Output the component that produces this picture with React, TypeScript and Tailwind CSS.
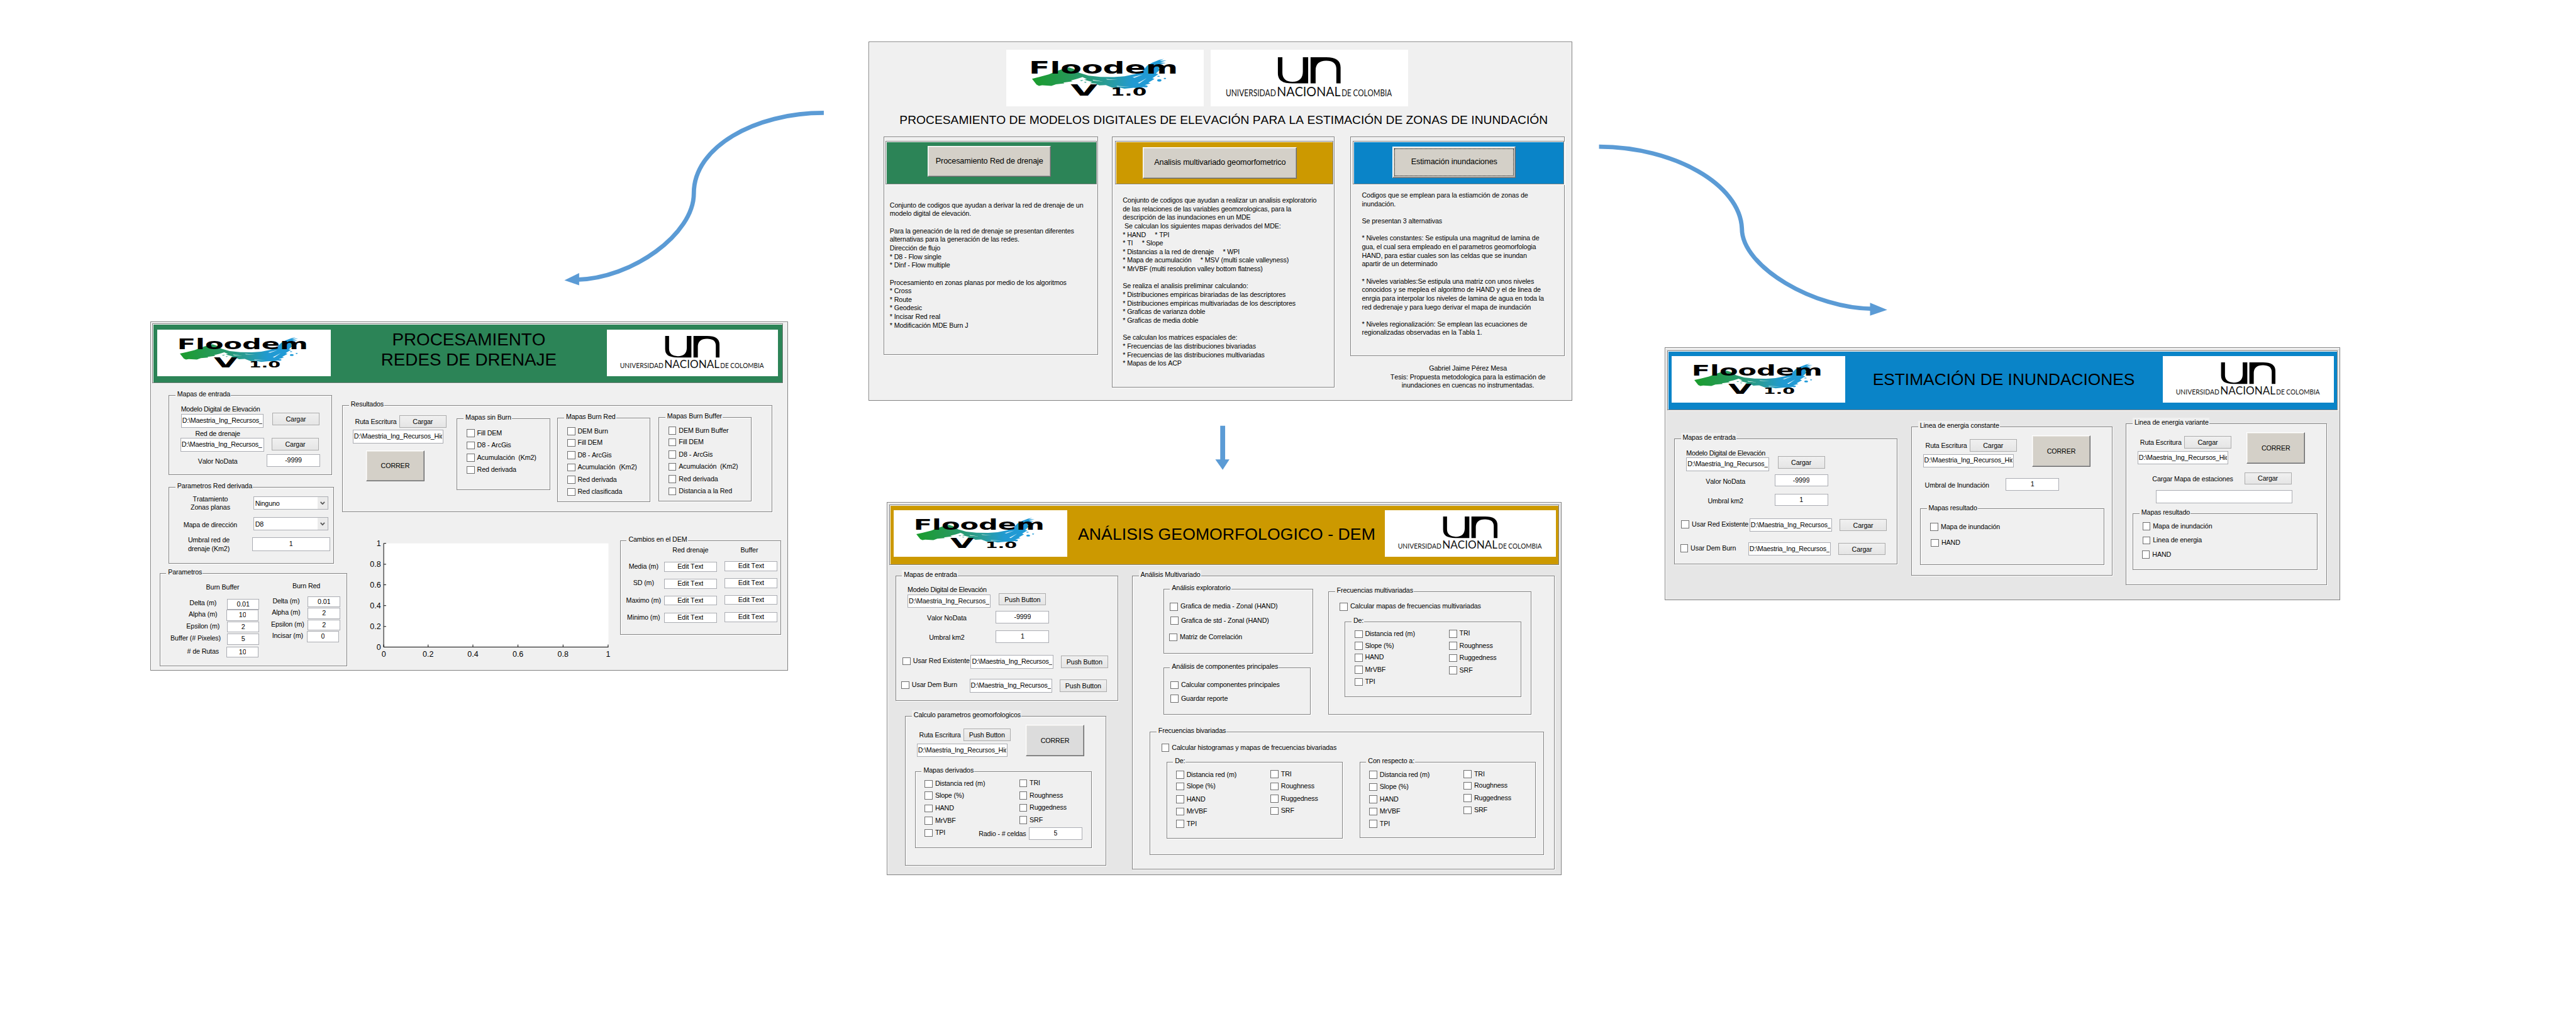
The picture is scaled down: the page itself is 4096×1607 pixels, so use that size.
import React from "react";
import clsx from "clsx";

type Kids = { className?: string; children?: React.ReactNode };

const ETCHED =
  "border border-[#828282] shadow-[inset_1px_1px_0_#fff,1px_1px_0_#fff]";

function AppWindow({ className, children }: Kids) {
  return (
    <section className={clsx("absolute flex flex-col items-start", ETCHED, className)}>
      {children}
    </section>
  );
}

function Panel({ title, className, children }: Kids & { title?: string }) {
  return (
    <div className={clsx("flex shrink-0 flex-col items-start bg-[#f0f0f0]", ETCHED, className)}>
      {title && (
        <div className="-mt-[10px] ml-[10px] h-[16px] shrink-0 whitespace-nowrap bg-[#f0f0f0] pl-[3px] pr-px leading-[16px]">
          {title}
        </div>
      )}
      {children}
    </div>
  );
}

function Text({ className, children }: Kids) {
  return (
    <div className={clsx("shrink-0 whitespace-pre leading-[14px]", className)}>{children}</div>
  );
}

function Field({ value = "", className, path }: { value?: string; className?: string; path?: boolean }) {
  return (
    <div
      className={clsx(
        "flex shrink-0 items-center overflow-hidden border border-[#abadb3] bg-white",
        path ? "justify-start px-px" : "justify-center",
        className
      )}
    >
      <span className={clsx("overflow-hidden whitespace-nowrap leading-[14px]", path && "tracking-[-0.2px]")}>{value}</span>
    </div>
  );
}

const SHORT_PATH = "D:\\Maestria_Ing_Recursos_";
const LONG_PATH = "D:\\Maestria_Ing_Recursos_Hid";

function FlatButton({ label, className }: { label: string; className?: string }) {
  return (
    <button
      className={clsx(
        "flex h-[20px] w-[77px] shrink-0 items-center justify-center whitespace-nowrap border border-[#acacac] bg-linear-to-b from-[#f0f0f0] to-[#e5e5e5]",
        className
      )}
    >
      {label}
    </button>
  );
}

function RaisedButton({ label, className, focused }: { label: string; className?: string; focused?: boolean }) {
  return (
    <button
      className={clsx(
        "flex shrink-0 items-stretch whitespace-nowrap border border-t-white border-l-white border-r-[#696969] border-b-[#696969] p-[2px] shadow-[inset_-1px_-1px_0_#a0a0a0,inset_1px_1px_0_#e9e7e3]",
        className
      )}
    >
      <span
        className={clsx(
          "flex flex-1 items-center justify-center border",
          focused ? "border-dotted border-black" : "border-transparent"
        )}
      >
        {label}
      </span>
    </button>
  );
}

function Check({ label, className }: { label: string; className?: string }) {
  return (
    <label className={clsx("flex h-[14px] shrink-0 items-center gap-[4px] whitespace-pre leading-[14px]", className)}>
      <span className="size-[13px] shrink-0 border border-[#707070] bg-white" />
      {label}
    </label>
  );
}

function Select({ value, className }: { value: string; className?: string }) {
  return (
    <div
      className={clsx(
        "flex h-[22px] w-[122px] shrink-0 items-stretch border border-[#abadb3] bg-white",
        className
      )}
    >
      <span className="flex-1 pl-[2px] pt-[3px] leading-[16px]">{value}</span>
      <span className="flex w-[16px] items-center justify-center bg-[#ebebeb]">
        <svg className="h-[6px] w-[8px]" viewBox="0 0 8 6">
          <path d="M0.8 1 L4 4.4 L7.2 1" fill="none" stroke="#555" strokeWidth="1.8" />
        </svg>
      </span>
    </div>
  );
}

function FloodemLogo({ className }: { className?: string }) {
  return (
    <svg className={clsx("shrink-0 bg-white", className)} viewBox="0 0 322 92" preserveAspectRatio="none">
      <defs>
        <linearGradient id="wave" x1="0" y1="0" x2="1" y2="0">
          <stop offset="0" stopColor="#1a9c2c" />
          <stop offset="0.3" stopColor="#27995c" />
          <stop offset="0.55" stopColor="#2a9c96" />
          <stop offset="0.75" stopColor="#219ad2" />
          <stop offset="1" stopColor="#219ad8" />
        </linearGradient>
      </defs>
      <g transform="scale(0.4334 0.3333) translate(-25 -33)" fill="url(#wave)">
        <path d="M122 175 L150 166 L185 154 L215 138 L240 126 L262 120 L280 128 L300 146 L335 160 L380 166 L430 167 L470 163 L510 152 L540 134 L556 110 L575 96 L600 83 L618 78 L602 88 L628 85 L604 95 L626 98 L596 106 L612 112 L598 124 L604 130 L588 150 L598 152 L575 172 L583 176 L560 194 L568 198 L546 206 L557 213 L540 216 L520 222 L505 219 L470 224 L448 217 L425 219 L400 206 L375 208 L362 199 L340 197 L348 191 L318 180 L328 177 L312 167 L290 176 L268 184 L275 188 L240 194 L244 198 L212 202 L195 210 L160 207 L148 210 L139 204 Z" />
        <ellipse cx="601" cy="183" rx="8" ry="6" fill="#219ad8" />
        <ellipse cx="622" cy="174" rx="4.500" ry="3" fill="#219ad8" />
        <ellipse cx="549" cy="212" rx="8" ry="5" fill="#219ad8" />
        <ellipse cx="598" cy="163" rx="5" ry="2" fill="#219ad8" />
        <ellipse cx="622" cy="120" rx="4" ry="1.500" fill="#219ad8" />
        <path d="M302 183 l14 -2 l-8 6 z M318 190 l10 1 l-6 4 z M430 223 l30 4 l-14 2 z" fill="#2a9c84" />
        <path d="M400 176 l45 5 l-40 -2 z M440 210 l50 3 l-48 0 z M350 180 l40 9 l-38 -5 z M500 168 l40 -14 l-32 16 z M520 196 l34 -24 l-28 26 z" fill="#fff" />
      </g>
      <g fontFamily='"DejaVu Sans"' fontWeight="700" fill="#000">
        <text x="37" y="39" fontSize="27.500" letterSpacing="0" textLength="243" lengthAdjust="spacingAndGlyphs">Floodem</text>
        <text x="105" y="75" fontSize="26" letterSpacing="0" textLength="44" lengthAdjust="spacingAndGlyphs">V</text>
        <text x="170" y="75" fontSize="18.500" letterSpacing="0" textLength="59" lengthAdjust="spacingAndGlyphs">1.0</text>
      </g>
    </svg>
  );
}

function UnalLogo({ className }: { className?: string }) {
  return (
    <svg className={clsx("shrink-0 bg-white", className)} viewBox="0 0 322 92" preserveAspectRatio="none">
      <g transform="scale(0.4334 0.3333) translate(-793 -33)">
        <path d="M1046 70 H1063 V146 C1063 174 1077 190 1101 190 C1127 190 1140 172 1140 140 V70 H1160 V198 H1100 C1062 198 1046 182 1046 148 Z" />
        <path d="M1169 198 V70 H1228 C1264 70 1282 86 1282 120 V198 H1266 V126 C1266 100 1252 87 1228 87 C1202 87 1188 103 1188 134 V198 Z" />
      </g>
      <g fontFamily="Lato" fill="#111">
        <text x="24.500" y="76" fontSize="15" letterSpacing="0" textLength="82" lengthAdjust="spacingAndGlyphs">UNIVERSIDAD</text>
        <text x="108" y="75.500" fontSize="22" letterSpacing="0" textLength="104" lengthAdjust="spacingAndGlyphs">NACIONAL</text>
        <text x="213.500" y="76" fontSize="15" letterSpacing="0" textLength="82" lengthAdjust="spacingAndGlyphs">DE COLOMBIA</text>
      </g>
    </svg>
  );
}

function Paragraph({ lines, className }: { lines: string[]; className?: string }) {
  return (
    <div className={className}>
      {lines.map((line, i) => (
        <Text key={i} className="h-[14px]">
          {line}
        </Text>
      ))}
    </div>
  );
}

const DRAINAGE_LINES = [
  "Conjunto de codigos que ayudan a derivar la red de drenaje de un",
  "modelo digital de elevación.",
  "",
  "Para la geneación de la red de drenaje se presentan diferentes",
  "alternativas para la generación de las redes.",
  "Dirección de flujo",
  "* D8 - Flow single",
  "* Dinf - Flow multiple",
  "",
  "Procesamiento en zonas planas por medio de los algoritmos",
  "* Cross",
  "* Route",
  "* Geodesic",
  "* Incisar Red real",
  "* Modificación MDE Burn J",
];

const GEOMORPHOMETRIC_LINES = [
  "Conjunto de codigos que ayudan a realizar un analisis exploratorio",
  "de las relaciones de las variables geomorologicas, para la",
  "descripción de las inundaciones en un MDE",
  " Se calculan los siguientes mapas derivados del MDE:",
  "* HAND     * TPI",
  "* TI     * Slope",
  "* Distancias a la red de drenaje     * WPI",
  "* Mapa de acumulación     * MSV (multi scale valleyness)",
  "* MrVBF (multi resolution valley bottom flatness)",
  "",
  "Se realiza el analisis preliminar calculando:",
  "* Distribuciones empiricas birariadas de las descriptores",
  "* Distribuciones empiricas multivariadas de los descriptores",
  "* Graficas de varianza doble",
  "* Graficas de media doble",
  "",
  "Se calculan los matrices espaciales de:",
  "* Frecuencias de las distribuciones bivariadas",
  "* Frecuencias de las distribuciones multivariadas",
  "* Mapas de los ACP",
];

const FLOOD_LINES = [
  "Codigos que se emplean para la estiamción de zonas de",
  "inundación.",
  "",
  "Se presentan 3 alternativas",
  "",
  "* Niveles constantes: Se estipula una magnitud de lamina de",
  "gua, el cual sera empleado en el parametros geomorfologia",
  "HAND, para estiar cuales son las celdas que se inundan",
  "apartir de un determinado",
  "",
  "* Niveles variables:Se estipula una matriz con unos niveles",
  "conocidos y se meplea el algoritmo de HAND y el de linea de",
  "enrgia para interpolar los niveles de lamina de agua en toda la",
  "red dedrenaje y para luego derivar el mapa de inundación",
  "",
  "* Niveles regionalización: Se emplean las ecuaciones de",
  "regionalizadas observadas en la Tabla 1.",
];

function MainWindow() {
  return (
    <AppWindow className="left-[1416px] top-[68px] h-[585px] w-[1148px] bg-[#f0f0f0]">
      <div className="ml-[224px] mt-[12px] flex gap-[11px]">
        <FloodemLogo className="h-[92px] w-[322px]" />
        <UnalLogo className="h-[92px] w-[322px]" />
      </div>
      <h1 className="ml-[50px] mt-[11px] whitespace-nowrap text-[19.7px] leading-[24px] tracking-[0.035px]">
        PROCESAMIENTO DE MODELOS DIGITALES DE ELEVACIÓN PARA LA ESTIMACIÓN DE ZONAS DE INUNDACIÓN
      </h1>
      <div className="mt-[15px] flex items-start">
        <Panel className="ml-[24px] h-[355px] w-[350px]">
          <Panel className="ml-[2px] mt-[6px] h-[71px] w-[345px] bg-[#2c8457]!">
            <RaisedButton label="Procesamiento Red de drenaje" className="ml-[68px] mt-[7px] h-[50px] w-[201px] bg-[#d4d0c8] text-[13px]" />
          </Panel>
          <Paragraph className="ml-[9px] mt-[27px] tracking-[-0.11px]" lines={DRAINAGE_LINES} />
        </Panel>
        <Panel className="ml-[22px] h-[409px] w-[363px]">
          <Panel className="ml-[4px] mt-[6px] h-[71px] w-[356px] bg-[#cc9900]!">
            <RaisedButton label="Analisis multivariado geomorfometrico" className="ml-[45px] mt-[9px] h-[51px] w-[251px] bg-[#d4d0c8] text-[13px]" />
          </Panel>
          <Paragraph className="ml-[17px] mt-[19px] tracking-[-0.13px]" lines={GEOMORPHOMETRIC_LINES} />
        </Panel>
        <div className="ml-[26px]">
          <Panel className="h-[358px] w-[350px]">
            <Panel className="ml-[3px] mt-[6px] h-[71px] w-[345px] bg-[#0a84c8]!">
              <RaisedButton focused label="Estimación inundaciones" className="ml-[64px] mt-[8px] h-[51px] w-[201px] bg-[#d4d0c8] text-[13px]" />
            </Panel>
            <Paragraph className="ml-[18px] mt-[11px] tracking-[-0.11px]" lines={FLOOD_LINES} />
          </Panel>
          <Paragraph
            className="ml-[34px] mt-[13px] text-center tracking-[-0.11px]"
            lines={[
              "Gabriel Jaime Pérez Mesa",
              "Tesis: Propuesta metodologica para la estimación de",
              "inundaciones en cuencas no instrumentadas.",
            ]}
          />
        </div>
      </div>
    </AppWindow>
  );
}

function AxesChart({ className }: { className?: string }) {
  const xs: [number, string][] = [[36, "0"], [108.5, "0.2"], [181.5, "0.4"], [255, "0.6"], [328.5, "0.8"], [402, "1"]];
  const ys: [number, string][] = [[11, "1"], [45, "0.8"], [78.500, "0.6"], [112.5, "0.4"], [146.5, "0.2"], [180, "0"]];
  return (
    <svg className={clsx("shrink-0", className)} viewBox="0 0 420 205" fontSize="12.800" letterSpacing="0">
      <rect x="36" y="11" width="366.500" height="169" fill="#fff" />
      <path d="M36 11 V180 H402.500" fill="none" stroke="#000" strokeWidth="1" />
      {ys.map(([y, label]) => (
        <g key={"y" + label}>
          <path d={`M36 ${y} h4`} stroke="#000" strokeWidth="1" />
          <text x="31.500" y={y + 4.6} textAnchor="end">{label}</text>
        </g>
      ))}
      {xs.map(([x, label]) => (
        <g key={"x" + label}>
          <path d={`M${x} 180 v-4`} stroke="#000" strokeWidth="1" />
          <text x={x} y="196" textAnchor="middle">{label}</text>
        </g>
      ))}
    </svg>
  );
}

function NumberField({ value, className }: { value: string; className?: string }) {
  return <Field value={value} className={clsx("h-[18px] w-[53px]", className)} />;
}

function EditField({ className }: { className?: string }) {
  return <Field value="Edit Text" className={clsx("h-[16px] w-[86px]", className)} />;
}

function DrainageWindow() {
  return (
    <AppWindow className="left-[245px] top-[524px] h-[569px] w-[1040px] bg-[#f0f0f0]">
      <Panel className="ml-[2px] mt-[2px] h-[98px] w-[1029px] bg-[#2c8457]!">
        <div className="flex w-full items-start">
          <FloodemLogo className="ml-[7px] mt-[9px] h-[76px] w-[283px]" />
          <h2 className="mt-[9px] flex-1 text-center text-[28.5px] leading-[33px] tracking-normal">
            PROCESAMIENTO
            <br />
            REDES DE DRENAJE
          </h2>
          <UnalLogo className="mr-[7px] mt-[9px] h-[76px] w-[279px]" />
        </div>
      </Panel>
      <div className="flex items-start">
        <div className="w-[312px] shrink-0">
          <Panel title="Mapas de entrada" className="ml-[29px] mt-[19px] h-[130px] w-[267px]">
            <div className="flex items-start">
              <div className="w-[158px]">
                <Text className="ml-[19px] mt-[10px] tracking-[-0.25px]">Modelo Digital de Elevación</Text>
                <Field path value={SHORT_PATH} className="ml-[19px] h-[22px] w-[135px]" />
                <Text className="mt-[3px] text-center">Red de drenaje</Text>
                <Field path value={SHORT_PATH} className="ml-[18px] h-[22px] w-[137px]" />
                <Text className="mt-[10px] text-center">Valor NoData</Text>
              </div>
              <div>
                <FlatButton label="Cargar" className="ml-[10px] mt-[22px]" />
                <FlatButton label="Cargar" className="ml-[9px] mt-[21px]" />
                <Field value="-9999" className="ml-px mt-[7px] h-[20px] w-[87px]" />
              </div>
            </div>
          </Panel>
          <Panel title="Parametros Red derivada" className="ml-[29px] mt-[20px] h-[125px] w-[270px]">
            <div className="flex items-start">
              <div className="w-[134px] text-center">
                <Text className="mt-[6px]">Tratamiento</Text>
                <Text>Zonas planas</Text>
                <Text className="mt-[14px]">Mapa de dirección</Text>
                <Text className="mt-[11px] -ml-[5px]">Umbral red de</Text>
                <Text className="-ml-[5px]">drenaje (Km2)</Text>
              </div>
              <div>
                <Select value="Ninguno" className="ml-[3px] mt-[8px]" />
                <Select value="D8" className="ml-[3px] mt-[12px]" />
                <Field value="1" className="ml-px mt-[11px] h-[22px] w-[127px]" />
              </div>
            </div>
          </Panel>
          <Panel title="Parametros" className="ml-[14px] mt-[15px] h-[152px] w-[306px]">
            <div className="mt-[8px] flex h-[16px] text-center">
              <Text className="mt-[2px] w-[204px]">Burn Buffer</Text>
              <Text className="w-[69px]">Burn Red</Text>
            </div>
            <div className="flex items-start">
              <div className="w-[108px] pl-[32px] text-center">
                <Text className="mt-[11px]">Delta (m)</Text>
                <Text className="mt-[5px]">Alpha (m)</Text>
                <Text className="mt-[5px]">Epsilon (m)</Text>
                <Text className="-ml-[24px] mt-[6px]">Buffer (# Pixeles)</Text>
                <Text className="mt-[7px]"># de Rutas</Text>
              </div>
              <div className="w-[54px]">
                <NumberField value="0.01" className="ml-px mt-[11px]" />
                <NumberField value="10" />
                <NumberField value="2" className="ml-px mt-px" />
                <NumberField value="5" className="ml-px mt-[2px]" />
                <NumberField value="10" className="mt-[3px]" />
              </div>
              <div className="w-[77px] pl-[10px] text-center">
                <Text className="mt-[8px]">Delta (m)</Text>
                <Text className="mt-[5px]">Alpha (m)</Text>
                <Text className="ml-[5px] mt-[5px]">Epsilon (m)</Text>
                <Text className="ml-[5px] mt-[5px]">Incisar (m)</Text>
              </div>
              <div>
                <NumberField value="0.01" className="ml-[2px] mt-[7px]" />
                <NumberField value="2" className="ml-[2px] mt-px" />
                <NumberField value="2" className="ml-[2px] mt-px" />
                <NumberField value="0" className="mt-px" />
              </div>
            </div>
          </Panel>
        </div>
        <div>
          <Panel title="Resultados" className="mt-[35px] h-[175px] w-[701px]">
            <div className="flex items-start">
              <div className="w-[186px]">
                <div className="flex items-start">
                  <Text className="ml-[20px] mt-[14px] w-[72px]">Ruta Escritura</Text>
                  <FlatButton label="Cargar" className="mt-[10px]" />
                </div>
                <Field path value={LONG_PATH} className="ml-[16px] mt-[4px] h-[22px] w-[148px]" />
                <RaisedButton label="CORRER" className="ml-[38px] mt-[11px] h-[51px] w-[95px] bg-[#d4d0c8]" />
              </div>
              <Panel title="Mapas sin Burn" className="mt-[15px] h-[117px] w-[152px]">
                <Check label="Fill DEM" className="ml-[15px] mt-[10px]" />
                <Check label="D8 - ArcGis" className="ml-[15px] mt-[6px]" />
                <Check label="Acumulación  (Km2)" className="ml-[15px] mt-[6px]" />
                <Check label="Red derivada" className="ml-[15px] mt-[6px]" />
              </Panel>
              <Panel title="Mapas Burn Red" className="ml-[12px] mt-[14px] h-[137px] w-[152px]">
                <Check label="DEM Burn" className="ml-[15px] mt-[8px]" />
                <Check label="Fill DEM" className="ml-[15px] mt-[5px]" />
                <Check label="D8 - ArcGis" className="ml-[15px] mt-[6px]" />
                <Check label="Acumulación  (Km2)" className="ml-[15px] mt-[6px]" />
                <Check label="Red derivada" className="ml-[15px] mt-[6px]" />
                <Check label="Red clasificada" className="ml-[15px] mt-[6px]" />
              </Panel>
              <Panel title="Mapas Burn Buffer" className="ml-[13px] mt-[13px] h-[137px] w-[152px]">
                <Check label="DEM Burn Buffer" className="ml-[15px] mt-[8px]" />
                <Check label="Fill DEM" className="ml-[15px] mt-[5px]" />
                <Check label="D8 - ArcGis" className="ml-[15px] mt-[6px]" />
                <Check label="Acumulación  (Km2)" className="ml-[15px] mt-[6px]" />
                <Check label="Red derivada" className="ml-[15px] mt-[6px]" />
                <Check label="Distancia a la Red" className="ml-[15px] mt-[6px]" />
              </Panel>
            </div>
          </Panel>
          <div className="flex items-start">
            <AxesChart className="ml-[32px] mt-[40px] h-[205px] w-[420px]" />
            <Panel title="Cambios en el DEM" className="ml-px mt-[46px] h-[154px] w-[263px]">
              <div className="flex items-start">
                <div className="w-[71px] pl-[4px] text-center">
                  <Text className="mt-[29px]">Media (m)</Text>
                  <Text className="mt-[13px]">SD (m)</Text>
                  <Text className="mt-[14px]">Maximo (m)</Text>
                  <Text className="mt-[14px]">Minimo (m)</Text>
                </div>
                <div>
                  <Text className="mt-[2px] text-center">Red drenaje</Text>
                  <EditField className="mt-[12px]" />
                  <EditField className="mt-[12px]" />
                  <EditField className="mt-[11px]" />
                  <EditField className="mt-[12px]" />
                </div>
                <div className="ml-[13px]">
                  <Text className="mt-[2px] pr-[6px] text-center">Buffer</Text>
                  <EditField className="mt-[11px]" />
                  <EditField className="mt-[12px]" />
                  <EditField className="mt-[11px]" />
                  <EditField className="mt-[12px]" />
                </div>
              </div>
            </Panel>
          </div>
        </div>
      </div>
    </AppWindow>
  );
}

function InputMaps({ button, className }: { button: string; className?: string }) {
  return (
    <Panel title="Mapas de entrada" className={clsx("h-[205px] w-[364px]", className)}>
      <div className="flex items-start">
        <div className="w-[163px]">
          <Text className="ml-[19px] mt-[10px] tracking-[-0.25px]">Modelo Digital de Elevación</Text>
          <Field path value={SHORT_PATH} className="ml-[19px] h-[22px] w-[135px]" />
          <Text className="mt-[10px] pl-[3px] text-center">Valor NoData</Text>
          <Text className="mt-[18px] pl-[3px] text-center">Umbral km2</Text>
        </div>
        <div>
          <FlatButton label={button} className="ml-[5px] mt-[22px]" />
          <Field value="-9999" className="mt-[9px] h-[20px] w-[87px]" />
          <Field value="1" className="mt-[12px] h-[20px] w-[87px]" />
        </div>
      </div>
      <div className="ml-[11px] mt-[20px] flex items-start">
        <Check label="Usar Red Existente" className="mt-[3px] w-[111px]" />
        <Field path value={SHORT_PATH} className="h-[22px] w-[135px]" />
        <FlatButton label={button} className="ml-[12px] mt-px" />
      </div>
      <div className="ml-[9px] mt-[17px] flex items-start">
        <Check label="Usar Dem Burn" className="mt-[3px] w-[111px]" />
        <Field path value={SHORT_PATH} className="h-[22px] w-[135px]" />
        <FlatButton label={button} className="ml-[12px] mt-px" />
      </div>
    </Panel>
  );
}

function OutputPath({ button, tone }: { button: string; tone: string }) {
  return (
    <div className="flex items-start">
      <div className="w-[196px]">
        <div className="flex items-start">
          <Text className="ml-[22px] mt-[18px] w-[72px]">Ruta Escritura</Text>
          <FlatButton label={button} className="mt-[14px]" />
        </div>
        <Field path value={LONG_PATH} className="ml-[18px] mt-[4px] h-[22px] w-[148px]" />
      </div>
      <RaisedButton label="CORRER" className={clsx("mt-[8px] h-[51px] w-[95px]", tone)} />
    </div>
  );
}

const LEFT_DESCRIPTORS = ["Distancia red (m)", "Slope (%)", "HAND", "MrVBF", "TPI"];
const RIGHT_DESCRIPTORS = ["TRI", "Roughness", "Ruggedness", "SRF"];

function Descriptors({ left, right, children }: { left: string[]; right: string[]; children?: React.ReactNode }) {
  return (
    <div className="ml-[15px] flex items-start">
      <div className="w-[154px] pt-[7px]">
        {LEFT_DESCRIPTORS.map((label, i) => (
          <Check key={label} label={label} className={left[i]} />
        ))}
      </div>
      <div className="pt-[6px]">
        {RIGHT_DESCRIPTORS.map((label, i) => (
          <Check key={label} label={label} className={right[i]} />
        ))}
        {children}
      </div>
    </div>
  );
}

const EVEN = ["", "mt-[6px]", "mt-[6px]", "mt-[6px]", "mt-[6px]"];
const CLOSE_START = ["", "mt-[5px]", "mt-[7px]", "mt-[6px]", "mt-[6px]"];
const CLOSE_TOP = ["", "mt-[5px]", "mt-[5px]", "mt-[6px]", "mt-[6px]"];
const CLOSE_SECOND = ["", "mt-[5px]", "mt-[6px]", "mt-[6px]"];

function GeomorphologyWindow() {
  return (
    <AppWindow className="left-[1446px] top-[818px] h-[609px] w-[1101px] bg-[#e6e6e6]">
      <Panel className="ml-[3px] mt-[4px] h-[98px] w-[1093px] bg-[#cc9900]!">
        <div className="flex w-full items-start">
          <FloodemLogo className="ml-[6px] mt-[8px] h-[76px] w-[283px]" />
          <h2 className="ml-[18px] mt-[30px] whitespace-nowrap text-[27.3px] leading-[34px] tracking-[0.04px]">
            ANÁLISIS GEOMORFOLOGICO - DEM
          </h2>
          <UnalLogo className="ml-auto mr-[5px] mt-[8px] h-[76px] w-[279px]" />
        </div>
      </Panel>
      <div className="flex items-start">
        <div className="w-[399px] shrink-0">
          <InputMaps button="Push Button" className="ml-[13px] mt-[17px]" />
          <Panel title="Calculo parametros geomorfologicos" className="ml-[29px] mt-[24px] h-[244px] w-[328px]">
            <OutputPath button="Push Button" tone="bg-[#dcdcdc]" />
            <Panel title="Mapas derivados" className="ml-[15px] mt-[23px] h-[126px] w-[288px]">
              <Descriptors left={CLOSE_START} right={EVEN}>
                <div className="-ml-[66px] mt-[5px] flex items-start">
                  <Text className="mt-[4px] w-[82px]">Radio - # celdas</Text>
                  <Field value="5" className="h-[20px] w-[87px]" />
                </div>
              </Descriptors>
            </Panel>
          </Panel>
        </div>
        <Panel title="Análisis Multivariado" className="mt-[17px] h-[479px] w-[689px]">
          <div className="flex items-start">
            <div className="w-[319px]">
              <Panel title="Análisis exploratorio" className="ml-[50px] mt-[15px] h-[106px] w-[245px]">
                <Check label="Grafica de media - Zonal (HAND)" className="ml-[10px] mt-[15px]" />
                <Check label="Grafica de std - Zonal (HAND)" className="ml-[11px] mt-[9px]" />
                <Check label="Matriz de Correlación" className="ml-[9px] mt-[13px]" />
              </Panel>
              <Panel title="Análisis de componentes principales" className="ml-[50px] mt-[22px] h-[77px] w-[240px]">
                <Check label="Calcular componentes principales" className="ml-[11px] mt-[15px]" />
                <Check label="Guardar reporte" className="ml-[11px] mt-[8px]" />
              </Panel>
            </div>
            <Panel title="Frecuencias multivariadas" className="mt-[19px] h-[201px] w-[331px]">
              <Check label="Calcular mapas de frecuencias multivariadas" className="ml-[18px] mt-[11px]" />
              <Panel title="De:" className="ml-[26px] mt-[17px] h-[123px] w-[288px]">
                <Descriptors left={CLOSE_TOP} right={EVEN} />
              </Panel>
            </Panel>
          </div>
          <Panel title="Frecuencias bivariadas" className="ml-[28px] mt-[28px] h-[201px] w-[643px]">
            <Check label="Calcular histogramas y mapas de frecuencias bivariadas" className="ml-[18px] mt-[12px]" />
            <div className="mt-[16px] flex items-start">
              <Panel title="De:" className="ml-[26px] h-[125px] w-[288px]">
                <Descriptors left={CLOSE_START} right={EVEN} />
              </Panel>
              <Panel title="Con respecto a:" className="ml-[27px] h-[124px] w-[288px]">
                <Descriptors left={EVEN} right={CLOSE_SECOND} />
              </Panel>
            </div>
          </Panel>
        </Panel>
      </div>
    </AppWindow>
  );
}

function FloodWindow() {
  return (
    <AppWindow className="left-[2715px] top-[566px] h-[412px] w-[1101px] bg-[#e6e6e6]">
      <Panel className="ml-[3px] mt-[4px] h-[98px] w-[1093px] bg-[#0a84c8]!">
        <div className="flex w-full items-start">
          <FloodemLogo className="ml-[6px] mt-[8px] h-[76px] w-[283px]" />
          <h2 className="ml-[45px] mt-[30px] whitespace-nowrap text-[27px] leading-[34px] tracking-normal">
            ESTIMACIÓN DE INUNDACIONES
          </h2>
          <UnalLogo className="ml-auto mr-[5px] mt-[8px] h-[76px] w-[279px]" />
        </div>
      </Panel>
      <div className="flex items-start">
        <div className="w-[401px] shrink-0">
          <InputMaps button="Cargar" className="ml-[14px] mt-[46px]" />
        </div>
        <Panel title="Linea de energia constante" className="mt-[26px] h-[243px] w-[328px]">
          <OutputPath button="Cargar" tone="bg-[#d4d0c8]" />
          <div className="ml-[21px] mt-[18px] flex items-start">
            <Text className="mt-[5px] w-[132px]">Umbral de Inundación</Text>
            <Field value="1" className="h-[20px] w-[87px]" />
          </div>
          <Panel title="Mapas resultado" className="ml-[13px] mt-[29px] h-[92px] w-[301px]">
            <Check label="Mapa de inundación" className="ml-[16px] mt-[16px]" />
            <Check label="HAND" className="ml-[17px] mt-[12px]" />
          </Panel>
        </Panel>
        <Panel title="Linea de energia variante" className="ml-[22px] mt-[21px] h-[264px] w-[328px]">
          <OutputPath button="Cargar" tone="bg-[#d4d0c8]" />
          <div className="ml-[42px] mt-[13px] flex items-start">
            <Text className="mt-[4px] w-[150px]">Cargar Mapa de estaciones</Text>
            <FlatButton label="Cargar" />
          </div>
          <Field className="ml-[48px] mt-[9px] h-[22px] w-[222px]" />
          <Panel title="Mapas resultado" className="ml-[10px] mt-[16px] h-[92px] w-[301px]">
            <Check label="Mapa de inundación" className="ml-[15px] mt-[7px]" />
            <Check label="Linea de energia" className="ml-[15px] mt-[9px]" />
            <Check label="HAND" className="ml-[14px] mt-[9px]" />
          </Panel>
        </Panel>
      </div>
    </AppWindow>
  );
}

export default function App() {
  return (
    <main className="h-[1607px] w-[4096px] overflow-hidden bg-white">
      <div className='relative h-[1648px] w-[4200px] bg-white font-["Liberation_Sans",Arial,sans-serif] text-[11px] tracking-[-0.13px] text-black [font-kerning:none] [zoom:0.975]'>
        <MainWindow />
        <DrainageWindow />
        <GeomorphologyWindow />
        <FloodWindow />
        <svg className="absolute left-[900px] top-[160px] h-[320px] w-[460px]" viewBox="0 0 460 320">
          <path d="M443 24 C330 24 231 80 231 155 C231 222 130 294 40 296" fill="none" stroke="#5b9bd5" strokeWidth="7" />
          <path d="M20 297 L44 285 V305 Z" fill="#5b9bd5" />
        </svg>
        <svg className="absolute left-[2590px] top-[220px] h-[310px] w-[500px]" viewBox="0 0 500 310">
          <path d="M18 18.500 C140 19 248 80 251 152 C251 215 370 283 465 283" fill="none" stroke="#5b9bd5" strokeWidth="7" />
          <path d="M488 284.500 L460 273 V294 Z" fill="#5b9bd5" />
        </svg>
        <svg className="absolute left-[1960px] top-[680px] h-[100px] w-[70px]" viewBox="0 0 70 100">
          <path d="M30 14 H38 V69 H45 L34 86 L22 69 H30 Z" fill="#5b9bd5" />
        </svg>
      </div>
    </main>
  );
}
